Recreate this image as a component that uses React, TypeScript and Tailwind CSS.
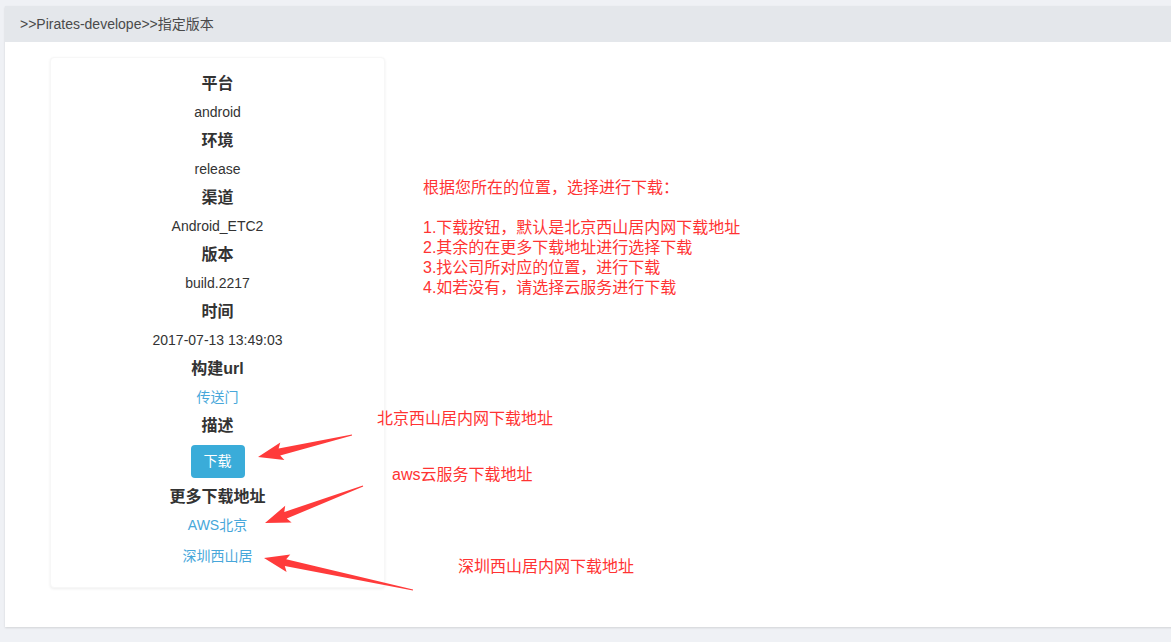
import React from 'react';

const font = { fontFamily: '"Liberation Sans", Arial, "Noto Sans CJK SC", sans-serif' };

type Pt = [number, number];

// tapered arrow like a screenshot-tool annotation
function arrowPoints(tail: Pt, tip: Pt): string {
    const dx = tip[0] - tail[0];
    const dy = tip[1] - tail[1];
    const len = Math.hypot(dx, dy);
    const ux = dx / len;
    const uy = dy / len;
    const nx = -uy;
    const ny = ux;
    const head = 22;
    const wing = 9;
    const shaft = 3.5;
    const bx = tip[0] - ux * head;
    const by = tip[1] - uy * head;
    const wx = tip[0] - ux * (head + 3);
    const wy = tip[1] - uy * (head + 3);
    const pts: Pt[] = [
        [tail[0] + nx * 0.6, tail[1] + ny * 0.6],
        [bx + nx * shaft, by + ny * shaft],
        [wx + nx * wing, wy + ny * wing],
        tip,
        [wx - nx * wing, wy - ny * wing],
        [bx - nx * shaft, by - ny * shaft],
        [tail[0] - nx * 0.6, tail[1] - ny * 0.6],
    ];
    return pts.map((p) => `${p[0].toFixed(1)},${p[1].toFixed(1)}`).join(' ');
}

function Heading({ children }: { children: React.ReactNode }) {
    return <div className="text-[16px] leading-[28px] font-bold text-[#333]">{children}</div>;
}

function Value({ children }: { children: React.ReactNode }) {
    return <div className="text-[14px] leading-[29px] text-[#333]">{children}</div>;
}

function LinkText({ children, className = '' }: { children: React.ReactNode; className?: string }) {
    return <div className={`text-[14px] leading-[29px] text-[#48a7da] ${className}`}>{children}</div>;
}

export default function App() {
    const info = [
        ['平台', 'android'],
        ['环境', 'release'],
        ['渠道', 'Android_ETC2'],
        ['版本', 'build.2217'],
        ['时间', '2017-07-13 13:49:03'],
    ];

    return (
        <div className="relative w-[1171px] h-[642px] overflow-hidden bg-[#eff1f5]" style={font}>
            <div className="pt-[6px] pl-[5px]">
                <div className="w-[1180px] shadow-[0_1px_2px_rgba(0,0,0,0.12)]">
                    {/* breadcrumb */}
                    <div className="h-[36px] bg-[#e4e7eb] flex items-center px-[15px] text-[14px] text-[#4a4a4a]">
                        &gt;&gt;Pirates-develope&gt;&gt;指定版本
                    </div>

                    {/* body */}
                    <div className="h-[585px] bg-white flex pl-[45px] pt-[15px]">
                        <div className="w-[335px] h-[531px] bg-white rounded-[4px] border border-[#f7f7f7] shadow-[0_1px_3px_rgba(0,0,0,0.07)] flex flex-col items-center pt-[12px]">
                            {info.map(([k, v]) => (
                                <React.Fragment key={k}>
                                    <Heading>{k}</Heading>
                                    <Value>{v}</Value>
                                </React.Fragment>
                            ))}
                            <Heading>构建url</Heading>
                            <LinkText>传送门</LinkText>
                            <Heading>描述</Heading>
                            <button className="mt-[5px] mb-[5px] h-[33px] w-[54px] rounded-[4px] bg-[#3aacd9] text-white text-[14px]">
                                下载
                            </button>
                            <Heading>更多下载地址</Heading>
                            <LinkText>AWS北京</LinkText>
                            <LinkText className="mt-[2px]">深圳西山居</LinkText>
                        </div>

                        <div className="ml-[38px] mt-[121px] text-[16px] leading-[20px] text-[#ff3333]">
                            <div>根据您所在的位置，选择进行下载：</div>
                            <div className="h-[20px]" />
                            <div>1.下载按钮，默认是北京西山居内网下载地址</div>
                            <div>2.其余的在更多下载地址进行选择下载</div>
                            <div>3.找公司所对应的位置，进行下载</div>
                            <div>4.如若没有，请选择云服务进行下载</div>
                        </div>
                    </div>
                </div>
            </div>

            {/* annotations */}
            <div className="absolute left-[377px] top-[409px] text-[16px] leading-[20px] text-[#ff3333]">北京西山居内网下载地址</div>
            <div className="absolute left-[392px] top-[465px] text-[16px] leading-[20px] text-[#ff3333]">aws云服务下载地址</div>
            <div className="absolute left-[458px] top-[557px] text-[16px] leading-[20px] text-[#ff3333]">深圳西山居内网下载地址</div>

            <svg className="absolute left-0 top-0 pointer-events-none" width={1171} height={642}>
                <polygon points={arrowPoints([352, 435], [258, 457])} fill="#ff3b3b" />
                <polygon points={arrowPoints([363, 486], [265, 523])} fill="#ff3b3b" />
                <polygon points={arrowPoints([413, 590], [264, 558])} fill="#ff3b3b" />
            </svg>
        </div>
    );
}
